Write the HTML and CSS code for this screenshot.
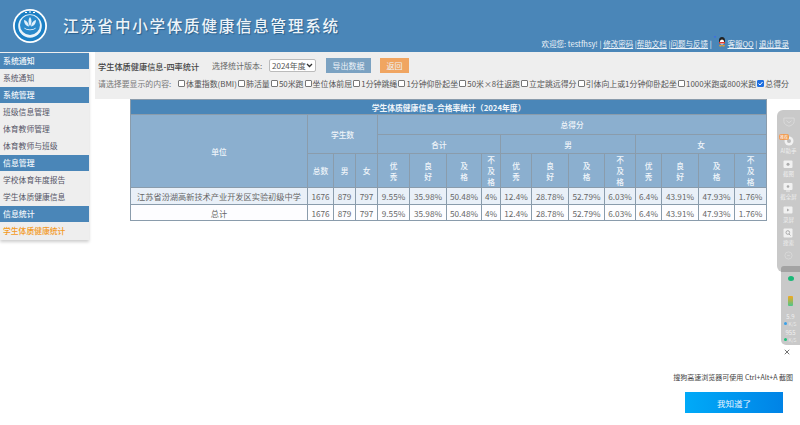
FILE: index.html
```html
<!DOCTYPE html>
<html>
<head>
  <title>江苏省中小学体质健康信息管理系统</title>
  <link rel="stylesheet" href="styles.css">
</head>
<body>
  <div class="header">
    <svg class="logo" viewBox="0 0 34 34">
      <circle cx="17" cy="17" r="17" fill="#fff"></circle>
      <circle cx="17" cy="17" r="15.200" fill="#1b7fc4"></circle>
      <circle cx="17" cy="17" r="11.800" fill="#e8f3fa"></circle>
      <circle cx="17" cy="16" r="10" fill="#2a8acb"></circle>
      <path d="M17 8c2 2.500 2 6 0 9.500c-2-3.500-2-7 0-9.500zM11 11c3 .5 4.500 3 5 6.500c-3-.5-5-3-5-6.500zM23 11c-3 .5-4.500 3-5 6.500c3-.5 5-3 5-6.500z" fill="#dff0fb"></path>
      <path d="M11 18.500c3 2.500 9 2.500 12 0c-1 3.500-11 3.500-12 0z" fill="#fff"></path>
      <path d="M12 3.500h2M16 3h2M20 3.500h2" stroke="#fff" stroke-width="1"></path>
    </svg>
    <h1>江苏省中小学体质健康信息管理系统</h1>
    <div class="userbar">
      欢迎您: testfhsy! | <a>修改密码</a> |<a>帮助文档</a> |<a>问题与反馈</a> |
      <svg class="qq" viewBox="0 0 13 11">
        <rect x="0" y="0" width="2" height="1.500" fill="#3f6fe0"></rect>
        <ellipse cx="8" cy="4.500" rx="3" ry="3.500" fill="#222"></ellipse>
        <ellipse cx="8" cy="6" rx="2.200" ry="2.500" fill="#fff"></ellipse>
        <rect x="5" y="6" width="6" height="1.500" fill="#e03a2a"></rect>
        <ellipse cx="6.500" cy="9.800" rx="1.500" ry=".8" fill="#f0a020"></ellipse>
        <ellipse cx="9.500" cy="9.800" rx="1.500" ry=".8" fill="#f0a020"></ellipse>
      </svg><a>客服QQ</a> | <a>退出登录</a>
    </div>
  </div>

  <div class="layout">
    <div class="sidebar">
      <div class="side-title">系统通知</div>
      <div class="side-item">系统通知</div>
      <div class="side-title">系统管理</div>
      <div class="side-item">班级信息管理</div>
      <div class="side-item">体育教师管理</div>
      <div class="side-item">体育教师与班级</div>
      <div class="side-title">信息管理</div>
      <div class="side-item">学校体育年度报告</div>
      <div class="side-item">学生体质健康信息</div>
      <div class="side-title">信息统计</div>
      <div class="side-item active">学生体质健康统计</div>
    </div>

    <div class="main">
      <div class="toolbar">
        <div class="tool-row">
          <b class="tool-title">学生体质健康信息-四率统计</b>
          <span class="tool-label">选择统计版本:</span>
          <select class="version"><option>2024年度</option></select>
          <button class="btn btn-blue">导出数据</button>
          <button class="btn btn-orange">返回</button>
        </div>
        <div class="check-row">
          <span class="check-label">请选择要显示的内容:</span>
          <label><input type="checkbox">体重指数(BMI)</label>
          <label><input type="checkbox">肺活量</label>
          <label><input type="checkbox">50米跑</label>
          <label><input type="checkbox">坐位体前屈</label>
          <label><input type="checkbox">1分钟跳绳</label>
          <label><input type="checkbox">1分钟仰卧起坐</label>
          <label><input type="checkbox">50米×8往返跑</label>
          <label><input type="checkbox">立定跳远得分</label>
          <label><input type="checkbox">引体向上或1分钟仰卧起坐</label>
          <label><input type="checkbox">1000米跑或800米跑</label>
          <label><input type="checkbox" checked>总得分</label>
        </div>
      </div>

      <table class="stats">
        <colgroup>
          <col class="c-unit"><col class="c-26"><col class="c-22"><col class="c-22">
          <col class="c-32"><col class="c-37"><col class="c-35"><col class="c-19">
          <col class="c-31"><col class="c-37"><col class="c-36"><col class="c-31">
          <col class="c-26"><col class="c-37"><col class="c-36"><col class="c-32">
        </colgroup>
        <tr class="r-title"><th colspan="16">学生体质健康信息-合格率统计（2024年度）</th></tr>
        <tr class="r-head1">
          <th rowspan="3">单位</th>
          <th colspan="3" rowspan="2">学生数</th>
          <th colspan="12">总得分</th>
        </tr>
        <tr class="r-head2">
          <th colspan="4">合计</th>
          <th colspan="4">男</th>
          <th colspan="4">女</th>
        </tr>
        <tr class="r-head3">
          <th>总数</th><th>男</th><th>女</th>
          <th>优<br>秀</th><th>良<br>好</th><th>及<br>格</th><th>不<br>及<br>格</th>
          <th>优<br>秀</th><th>良<br>好</th><th>及<br>格</th><th>不<br>及<br>格</th>
          <th>优<br>秀</th><th>良<br>好</th><th>及<br>格</th><th>不<br>及<br>格</th>
        </tr>
        <tr class="r-odd">
          <td>江苏省汾湖高新技术产业开发区实验初级中学</td>
          <td>1676</td><td>879</td><td>797</td>
          <td>9.55%</td><td>35.98%</td><td>50.48%</td><td>4%</td>
          <td>12.4%</td><td>28.78%</td><td>52.79%</td><td>6.03%</td>
          <td>6.4%</td><td>43.91%</td><td>47.93%</td><td>1.76%</td>
        </tr>
        <tr class="r-even">
          <td>总计</td>
          <td>1676</td><td>879</td><td>797</td>
          <td>9.55%</td><td>35.98%</td><td>50.48%</td><td>4%</td>
          <td>12.4%</td><td>28.78%</td><td>52.79%</td><td>6.03%</td>
          <td>6.4%</td><td>43.91%</td><td>47.93%</td><td>1.76%</td>
        </tr>
      </table>
    </div>
  </div>

  <!-- browser side panel -->
  <div class="dock">
    <svg class="dock-shield" viewBox="0 0 14 12" fill="none" stroke="#dcdcdc" stroke-width="1"><path d="M1 2h12v4c0 3-3 4.500-6 5.500c-3-1-6-2.500-6-5.500z"></path><path d="M4 5l3 2.500L10 5"></path></svg>
    <span class="dock-badge">推荐</span>
    <div class="dock-tool">
      <svg viewBox="0 0 10 10"><circle cx="5" cy="5" r="4.500" fill="#f1f1f1"></circle><circle cx="5" cy="5" r="2" fill="#bdbdbd"></circle></svg>
      <span>AI助手</span>
    </div>
    <div class="dock-tool">
      <svg viewBox="0 0 10 10"><rect x=".5" y="1.500" width="9" height="7.500" rx="1" fill="#f1f1f1"></rect><circle cx="5" cy="5.200" r="1.500" fill="#aaa"></circle></svg>
      <span>截图</span>
    </div>
    <div class="dock-tool">
      <svg viewBox="0 0 10 10"><rect x=".5" y="1" width="9" height="7" rx="1" fill="#f1f1f1"></rect><circle cx="5" cy="4.500" r="1.300" fill="#aaa"></circle><rect x="3" y="8.500" width="4" height="1" fill="#f1f1f1"></rect></svg>
      <span>截全屏</span>
    </div>
    <div class="dock-tool">
      <svg viewBox="0 0 10 10"><rect x=".5" y="1.500" width="9" height="7" rx="1" fill="#f1f1f1"></rect><path d="M4 3.500l2.500 1.500L4 6.500z" fill="#aaa"></path></svg>
      <span>录屏</span>
    </div>
    <div class="dock-tool">
      <svg viewBox="0 0 10 10"><rect x=".5" y=".5" width="9" height="9" rx="1" fill="#f1f1f1"></rect><circle cx="4.800" cy="4.500" r="1.800" fill="none" stroke="#aaa"></circle><path d="M6 6l1.500 1.500" stroke="#aaa"></path></svg>
      <span>搜索</span>
    </div>
    <svg class="dock-more" viewBox="0 0 10 10" fill="none" stroke="#d8d8d8"><circle cx="5" cy="5" r="4"></circle><path d="M3.500 5h3"></path></svg>
  </div>
  <div class="speed">
    <span class="speed-dot"></span>
    <span class="speed-bar"></span>
    <div class="speed-num">5.9</div>
    <div class="speed-unit"><i class="up"></i>K/S</div>
    <div class="speed-num">955</div>
    <div class="speed-unit"><i class="down"></i>K/S</div>
  </div>

  <!-- screenshot tip -->
  <svg class="tip-close" viewBox="0 0 8 8" stroke="#444" stroke-width="1"><path d="M1 1l6 6M7 1L1 7"></path></svg>
  <div class="tip">
    <p>搜狗高速浏览器可使用 Ctrl+Alt+A 截图</p>
    <button class="tip-btn">我知道了</button>
  </div>
</body>
</html>
```

FILE: styles.css
```css
body {
  margin: 0;
  width: 800px;
  height: 425px;
  overflow: hidden;
  position: relative;
  background-color: #fff;
  font-family: "Noto Sans CJK SC", "Noto Sans", sans-serif;
  font-size: 8px;
  color: #555;
}

/* Header */
.header {
  height: 52px;
  box-sizing: border-box;
  padding: 9px 11px 0 13px;
  display: flex;
  align-items: flex-start;
  gap: 16px;
  position: relative;
  background-color: #4a86b8;
}
.logo { width: 34px; height: 34px; flex: none; }
.header h1 {
  margin: 6px 0 0;
  font-size: 15.5px;
  line-height: 20px;
  font-weight: 500;
  letter-spacing: 1.8px;
  color: #eef4f9;
  text-shadow: 1px 1px 1px #2b5f8a;
}
.userbar {
  margin-left: auto;
  align-self: flex-end;
  padding-bottom: 3px;
  font-size: 7.5px;
  line-height: 11px;
  color: #eef4f9;
  white-space: nowrap;
}
.userbar a { text-decoration: underline; }
.qq { width: 13px; height: 11px; vertical-align: 0; margin-left: 1px; }

/* Page layout */
.layout { display: flex; gap: 6px; }
.sidebar {
  width: 89px;
  flex: none;
  padding-top: 1px;
  background-color: #eee;
  box-shadow: 0 2px 3px rgba(0, 0, 0, 0.2);
}
.side-title {
  height: 16px;
  line-height: 16px;
  margin-bottom: 1px;
  padding-left: 3px;
  font-size: 7.9px;
  font-weight: 500;
  color: #f2f6fa;
  background-color: #4a86b8;
}
.side-item {
  height: 16px;
  line-height: 16px;
  margin-bottom: 1px;
  padding-left: 3px;
  font-size: 7.8px;
  color: #556;
}
.side-item.active { color: #f39a1e; font-weight: 500; }

.main { flex: 1; }
.toolbar {
  height: 47px;
  box-sizing: border-box;
  padding: 6px 0 0 3px;
  background-color: #eee;
}
.tool-row { display: flex; align-items: center; height: 15px; white-space: nowrap; }
.tool-title { width: 114px; font-size: 8.2px; font-weight: 500; color: #444; }
.tool-label { width: 57px; font-size: 8px; color: #666; }
.version {
  appearance: none;
  width: 47px;
  height: 13px;
  padding: 0 0 0 2px;
  font-family: inherit;
  font-size: 8px;
  color: #555;
  border: 1px solid #bbb;
  border-radius: 2px;
  background: #fff url("data:image/svg+xml,%3Csvg xmlns='http://www.w3.org/2000/svg' width='7' height='5'%3E%3Cpath d='M1 1l2.500 2.500L6 1' fill='none' stroke='%23333' stroke-width='1.300'/%3E%3C/svg%3E") no-repeat right 2px center;
}
.btn {
  height: 15px;
  padding: 0;
  border: none;
  font-family: inherit;
  font-size: 8px;
  color: #eef4f9;
}
.btn-blue { width: 45px; margin-left: 10px; background-color: #7ba2c2; }
.btn-orange { width: 29px; margin-left: 9px; background-color: #f0a561; }

.check-row {
  display: flex;
  align-items: center;
  margin-top: 4px;
  height: 12px;
  font-size: 7.9px;
  white-space: nowrap;
  color: #555;
}
.check-label { width: 80px; color: #777; }
.check-row label { display: flex; align-items: center; margin-right: 1.2px; }
.check-row input {
  appearance: none;
  width: 7px;
  height: 7px;
  margin: 0 1px 0 0;
  box-sizing: border-box;
  background-color: #fff;
  border: 1px solid #777;
  border-radius: 1px;
}
.check-row input:checked {
  border-color: #1f6fe0;
  background: #1f6fe0 url("data:image/svg+xml,%3Csvg xmlns='http://www.w3.org/2000/svg' width='5' height='5'%3E%3Cpath d='M.5 2.500l1.500 1.500L4.500 1' fill='none' stroke='%23fff'/%3E%3C/svg%3E") no-repeat center;
}

/* Stats table */
.stats {
  width: 635px;
  margin-left: 35px;
  table-layout: fixed;
  border-collapse: collapse;
  font-size: 7.7px;
}
.stats th, .stats td { padding: 0; text-align: center; border: 1px solid #8a9cac; }
.stats th { color: #f0f5fa; font-weight: 500; line-height: 11px; background-color: #8bafcf; }
.stats td { color: #666; font-size: 8.2px; }
.r-title th { background-color: #4a86b8; height: 14px; font-size: 7.8px; font-weight: 700; }
.r-head1 th { height: 19px; }
.r-head2 th { height: 18px; }
.r-head3 th { height: 33px; }
.r-odd td { height: 16px; background-color: #e9f0f8; }
.r-even td { height: 15px; background-color: #fdfdff; }
.c-unit { width: 177px; }
.c-19 { width: 19px; }
.c-22 { width: 22px; }
.c-26 { width: 26px; }
.c-31 { width: 31px; }
.c-32 { width: 32px; }
.c-35 { width: 35px; }
.c-36 { width: 36px; }
.c-37 { width: 37px; }

/* Browser side panel */
.dock {
  position: absolute;
  left: 777px;
  top: 110px;
  width: 23px;
  height: 162px;
  padding-top: 6px;
  box-sizing: border-box;
  display: flex;
  flex-direction: column;
  align-items: center;
  background-color: #c9c9c9;
  border-radius: 6px 0 0 6px;
}
.dock-shield { width: 12px; height: 11px; margin-bottom: 8px; }
.dock-badge {
  position: absolute;
  left: 2px;
  top: 24px;
  width: 10px;
  height: 6px;
  font-size: 4px;
  line-height: 6px;
  text-align: center;
  color: #fff;
  background-color: #f09a50;
  border-radius: 2px;
}
.dock-tool {
  height: 23px;
  display: flex;
  flex-direction: column;
  align-items: center;
  font-size: 5.5px;
  line-height: 7px;
  color: #efefef;
  white-space: nowrap;
}
.dock-tool svg { width: 10px; height: 10px; margin: 1px 0 2px; }
.dock-more { width: 9px; height: 9px; margin-top: 1px; }
.speed {
  position: absolute;
  left: 781px;
  top: 266px;
  width: 19px;
  height: 79px;
  padding-top: 7px;
  box-sizing: border-box;
  display: flex;
  flex-direction: column;
  align-items: center;
  background-color: #c9c9c9;
  border-top: 6px solid #a3a3a3;
  border-radius: 3px 0 0 5px;
}
.speed-dot { width: 6px; height: 6px; margin-top: -3px; border-radius: 50%; background-color: #19b877; }
.speed-bar {
  width: 5px;
  height: 12px;
  margin: 15px 0 7px;
  border-radius: 1px;
  background: linear-gradient(#f3a81f, #4cc68c);
}
.speed-num { height: 7px; font-size: 6px; line-height: 7px; color: #f0f0f0; }
.speed-unit { height: 7px; margin-bottom: 2px; font-size: 5px; line-height: 7px; color: #e8e8e8; white-space: nowrap; }
.speed-unit i { display: inline-block; width: 3px; height: 3px; margin-right: 1px; border-radius: 50%; vertical-align: 1px; }
.up { background-color: #3aa0e8; }
.down { background-color: #1fbf7a; }

/* Screenshot tip */
.tip-close { position: absolute; left: 784px; top: 349px; width: 6px; height: 6px; }
.tip {
  position: absolute;
  left: 660px;
  top: 372px;
  width: 140px;
  text-align: right;
}
.tip p { margin: 0 7px 9px 0; font-size: 7px; line-height: 11px; color: #444; white-space: nowrap; }
.tip-btn {
  display: block;
  width: 98px;
  height: 21px;
  margin-left: 25px;
  padding: 0;
  border: none;
  font-family: inherit;
  font-size: 8.5px;
  color: #eaf6ff;
  background: linear-gradient(90deg, #00aaf8, #0083e6);
}
```
